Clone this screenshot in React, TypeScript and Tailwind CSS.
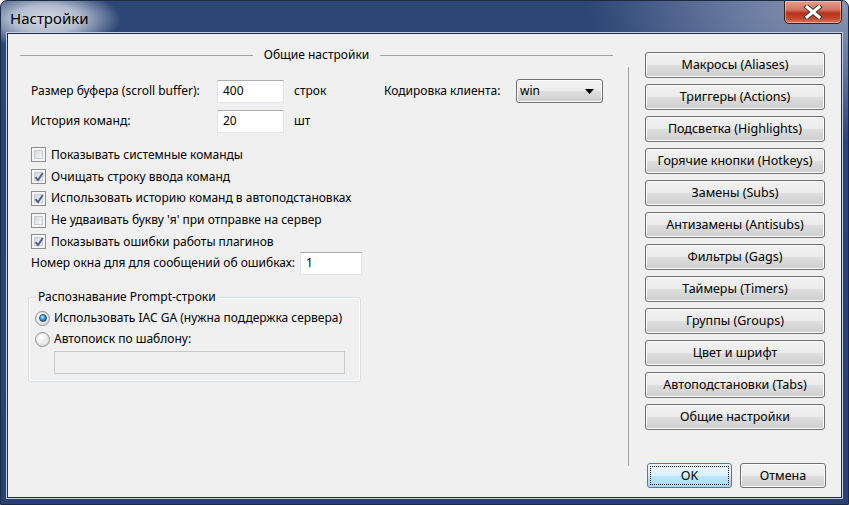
import React from 'react';

const font = "font-['Noto_Sans','Open_Sans',sans-serif]";

const TextBox = ({ value, w }: { value?: string; w: string }) => (
  <div className={`${w} h-[23px] bg-white border border-[#e2e3ea] border-t-[#abadb3] flex items-center px-[5px] shrink-0`}>
    {value}
  </div>
);

const CheckBox = ({ label, checked }: { label: string; checked?: boolean }) => (
  <div className="h-[21.75px] flex items-center gap-[5px] whitespace-nowrap">
    <span className="relative w-[15px] h-[15px] border border-[#8e8f8f] bg-[#f4f4f4] p-[2px] flex shrink-0">
      <span className="flex-1 border border-[#c9ccd1] bg-[linear-gradient(135deg,#d4d7db,#f7f7f7)]" />
      {checked && (
        <svg className="absolute left-[1px] top-[1px]" width="12" height="12" viewBox="0 0 12 12">
          <path d="M2.5 6.2 L5 9.2 L9.8 2" fill="none" stroke="#4a5f8c" strokeWidth="2" />
        </svg>
      )}
    </span>
    <span>{label}</span>
  </div>
);

const Radio = ({ label, checked }: { label: string; checked?: boolean }) => (
  <div className="h-[21px] flex items-center gap-[4px] whitespace-nowrap">
    <span className="w-[15px] h-[15px] rounded-full border border-[#8e8f8f] bg-[radial-gradient(circle_at_40%_35%,#ffffff,#d2d4d8)] flex items-center justify-center shrink-0">
      {checked && (
        <span className="w-[8px] h-[8px] rounded-full bg-[radial-gradient(circle_at_40%_35%,#b6ecff,#2a8ad4_55%,#0d3f74)] border border-[#1d4f7c]" />
      )}
    </span>
    <span>{label}</span>
  </div>
);

const SideButton = ({ label }: { label: string }) => (
  <button className="w-[180px] h-[26px] rounded-[3px] border border-[#707070] bg-[linear-gradient(#f2f2f2_0%,#ebebeb_50%,#dddddd_51%,#cfcfcf_100%)] shadow-[inset_0_0_0_1px_#fcfcfc] text-[12.5px] text-black flex items-center justify-center whitespace-nowrap">
    {label}
  </button>
);

export default function App() {
  return (
    <div className={`${font} w-[849px] h-[505px] relative rounded-t-[7px] border border-[#1c2a44] bg-[radial-gradient(ellipse_75px_30px_at_45px_18px,#d3d9e3_0%,#b3bdcf_45%,rgba(43,65,112,0)_100%),radial-gradient(ellipse_260px_140px_at_100%_0%,#8b98b5_0%,#6c7da2_40%,rgba(43,65,112,0)_100%),linear-gradient(#2e4676,#2a416f)] flex flex-col text-black overflow-hidden`}>
      {/* title bar */}
      <div className="h-[32px] flex items-start justify-between shrink-0">
        <span className="text-[15px] pl-[9px] pt-[7px] leading-[20px]">Настройки</span>
        <button className="relative w-[58px] h-[24px] mr-[6px] mt-[-1px] rounded-b-[5px] border border-[#3a1a16] bg-[linear-gradient(#e6a08f_0%,#d4735d_40%,#b8321c_55%,#c4482f_80%,#dc7a62_100%)] shadow-[inset_0_0_0_1px_rgba(255,220,210,0.5)] flex items-center justify-center">
          <svg width="20" height="14" viewBox="0 0 20 14">
            <path d="M4 2 L16 12 M16 2 L4 12" stroke="#3b3b3b" strokeWidth="5" strokeLinecap="square" />
            <path d="M4 2 L16 12 M16 2 L4 12" stroke="#ffffff" strokeWidth="3" strokeLinecap="square" />
          </svg>
        </button>
      </div>

      {/* client area */}
      <div className="mx-[6px] mb-[6px] flex-1 border border-[#1f2e4c] shadow-[0_0_0_1px_#c6cfe0] bg-[#f0f0f0] flex text-[12px] leading-[16px]">
        {/* left panel */}
        <div className="w-[605px] pl-[12px] pt-[13px] flex flex-col">
          <div className="h-[16px] flex items-center">
            <div className="w-[233px] h-px bg-[#a0a0a0]" />
            <span className="w-[127px] text-center">Общие настройки</span>
            <div className="flex-1 h-px bg-[#a0a0a0]" />
          </div>

          <div className="pl-[11px] mt-[16px] flex flex-col">
            <div className="h-[24px] flex items-center">
              <span className="w-[186px]">Размер буфера (scroll buffer):</span>
              <TextBox value="400" w="w-[67px]" />
              <span className="w-[100px] pl-[10px]">строк</span>
              <span className="w-[132px]">Кодировка клиента:</span>
              <div className="w-[87px] h-[24px] rounded-[3px] border border-[#707070] bg-[linear-gradient(#f2f2f2_0%,#ebebeb_50%,#dddddd_51%,#cfcfcf_100%)] shadow-[inset_0_0_0_1px_#fcfcfc] flex items-center justify-between pl-[3px] pr-[8px]">
                <span>win</span>
                <svg width="9" height="5" viewBox="0 0 9 5">
                  <path d="M0 0 H9 L4.5 5 Z" fill="#000" />
                </svg>
              </div>
            </div>

            <div className="h-[24px] mt-[6px] flex items-center">
              <span className="w-[186px]">История команд:</span>
              <TextBox value="20" w="w-[67px]" />
              <span className="pl-[10px]">шт</span>
            </div>

            <div className="mt-[11px] flex flex-col">
              <CheckBox label="Показывать системные команды" />
              <CheckBox label="Очищать строку ввода команд" checked />
              <CheckBox label="Использовать историю команд в автоподстановках" checked />
              <CheckBox label="Не удваивать букву 'я' при отправке на сервер" />
              <CheckBox label="Показывать ошибки работы плагинов" checked />
            </div>

            <div className="h-[23px] mt-[-1px] flex items-center whitespace-nowrap">
              <span className="w-[269px]">Номер окна для для сообщений об ошибках:</span>
              <TextBox value="1" w="w-[62px]" />
            </div>
          </div>

          {/* group box */}
          <div className="ml-[8px] mt-[22px] w-[333px] h-[85px] relative rounded-[3px] border border-[#d5dfe5] shadow-[inset_0_0_0_1px_#ffffff] flex flex-col pl-[6px] pt-[10px]">
            <span className="absolute left-[7px] top-[-9px] px-[2px] bg-[#f0f0f0] whitespace-nowrap">Распознавание Prompt-строки</span>
            <Radio label="Использовать IAC GA (нужна поддержка сервера)" checked />
            <Radio label="Автопоиск по шаблону:" />
            <div className="ml-[19px] mt-[1px] w-[291px] h-[23px] border border-[#c9c9c9] bg-[#f0f0f0]" />
          </div>
        </div>

        {/* vertical separator */}
        <div className="w-[16px] flex justify-start pl-[15px]">
          <div className="w-px mt-[33px] h-[399px] bg-[#a0a0a0]" />
        </div>

        {/* right panel */}
        <div className="flex-1 pl-[16px] pt-[18px] pb-[9px] flex flex-col">
          <div className="flex flex-col gap-[6px]">
            <SideButton label="Макросы (Aliases)" />
            <SideButton label="Триггеры (Actions)" />
            <SideButton label="Подсветка (Highlights)" />
            <SideButton label="Горячие кнопки (Hotkeys)" />
            <SideButton label="Замены (Subs)" />
            <SideButton label="Антизамены (Antisubs)" />
            <SideButton label="Фильтры (Gags)" />
            <SideButton label="Таймеры (Timers)" />
            <SideButton label="Группы (Groups)" />
            <SideButton label="Цвет и шрифт" />
            <SideButton label="Автоподстановки (Tabs)" />
            <SideButton label="Общие настройки" />
          </div>
          <div className="mt-auto flex gap-[8px] pl-[2px]">
            <button className="w-[85px] h-[25px] rounded-[3px] border border-[#3c7fb1] bg-[linear-gradient(#eaf6fd_0%,#d9f0fc_50%,#bee6fd_51%,#a7d9f5_100%)] p-[2px] flex">
              <span className="flex-1 border border-dotted border-black flex items-center justify-center text-[12.5px]">OK</span>
            </button>
            <button className="w-[86px] h-[25px] rounded-[3px] border border-[#707070] bg-[linear-gradient(#f2f2f2_0%,#ebebeb_50%,#dddddd_51%,#cfcfcf_100%)] shadow-[inset_0_0_0_1px_#fcfcfc] flex items-center justify-center text-[12.5px]">
              Отмена
            </button>
          </div>
        </div>
      </div>
    </div>
  );
}
